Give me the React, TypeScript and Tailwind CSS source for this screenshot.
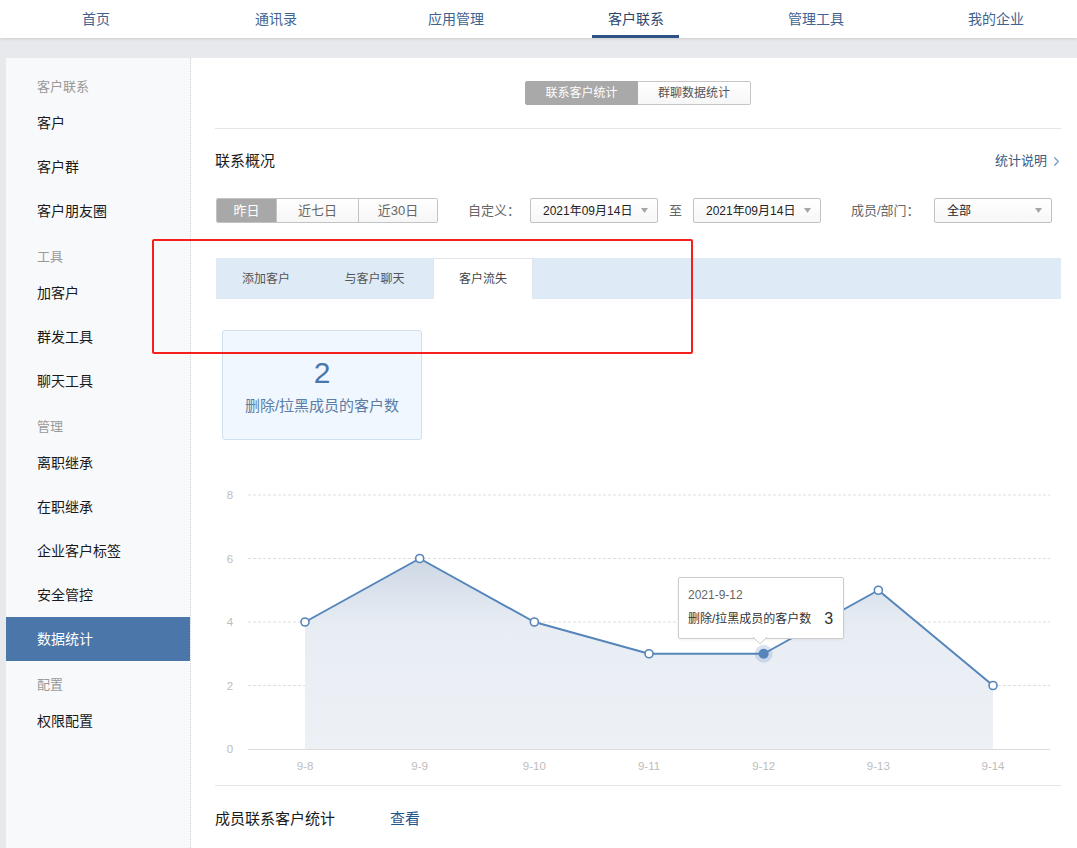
import React from "react";
import { ChevronRight } from "lucide-react";

const navItems = ["首页", "通讯录", "应用管理", "客户联系", "管理工具", "我的企业"];

type SideEntry = { type: "h" | "i"; label: string; active?: boolean };
const side: SideEntry[] = [
  { type: "h", label: "客户联系" },
  { type: "i", label: "客户" },
  { type: "i", label: "客户群" },
  { type: "i", label: "客户朋友圈" },
  { type: "h", label: "工具" },
  { type: "i", label: "加客户" },
  { type: "i", label: "群发工具" },
  { type: "i", label: "聊天工具" },
  { type: "h", label: "管理" },
  { type: "i", label: "离职继承" },
  { type: "i", label: "在职继承" },
  { type: "i", label: "企业客户标签" },
  { type: "i", label: "安全管控" },
  { type: "i", label: "数据统计", active: true },
  { type: "h", label: "配置" },
  { type: "i", label: "权限配置" },
];

function Caret() {
  return (
    <svg width="7" height="5" viewBox="0 0 7 5">
      <path d="M0 0h7L3.5 5z" fill="#a6a6a6" />
    </svg>
  );
}

function Select({ text, w }: { text: string; w: string }) {
  return (
    <div
      className={`${w} h-[25px] border border-[#c2c2c2] rounded-[2px] bg-gradient-to-b from-white to-[#f7f7f7] flex items-center justify-between pl-[12px] pr-[9px] text-[12px] text-[#222] leading-none`}
    >
      <span>{text}</span>
      <Caret />
    </div>
  );
}

const vals = [4, 6, 4, 3, 3, 5, 2];
const xlabels = ["9-8", "9-9", "9-10", "9-11", "9-12", "9-13", "9-14"];
const X0 = 215;
const Y0 = 480;
const px = (i: number) => 305 + i * 114.67 - X0;
const py = (v: number) => 748 - v * 31.75 - Y0;

function Chart() {
  const pts = vals.map((v, i) => `${px(i)},${py(v)}`).join(" ");
  const area = `${px(0)},${py(0)} ${pts} ${px(6)},${py(0)}`;
  return (
    <div className="relative mt-[41px] h-[305px] border-b border-[#e3e3e3]">
      <svg width="846" height="305" viewBox="0 0 846 305" className="absolute left-0 top-0">
        <defs>
          <linearGradient id="ar" x1="0" y1={py(6)} x2="0" y2={py(0)} gradientUnits="userSpaceOnUse">
            <stop offset="0" stopColor="#cdd8e4" />
            <stop offset="0.35" stopColor="#e8edf4" />
            <stop offset="1" stopColor="#edf1f6" />
          </linearGradient>
        </defs>
        {[2, 4, 6, 8].map((v) => (
          <line key={v} x1="33" x2="835" y1={py(v)} y2={py(v)} stroke="#dedede" strokeDasharray="3 2" strokeWidth="1" />
        ))}
        <polygon points={area} fill="url(#ar)" />
        <line x1="33" x2="835" y1={py(0) + 0.5} y2={py(0) + 0.5} stroke="#dcdcdc" strokeWidth="1" />
        {[0, 2, 4, 6, 8].map((v) => (
          <text key={v} x="15" y={py(v) + 4} textAnchor="middle" fontSize="11.5" fill="#bdbdbd" fontFamily="Liberation Sans, sans-serif">
            {v}
          </text>
        ))}
        {xlabels.map((l, i) => (
          <text key={l} x={px(i)} y="289" textAnchor="middle" fontSize="11.5" fill="#bdbdbd" fontFamily="Liberation Sans, sans-serif">
            {l}
          </text>
        ))}
        <polyline points={pts} fill="none" stroke="#5585bb" strokeWidth="2" strokeLinejoin="round" />
        {vals.map((v, i) =>
          i === 4 ? (
            <g key={i}>
              <circle cx={px(i)} cy={py(v)} r="9" fill="#5585bb" opacity="0.22" />
              <circle cx={px(i)} cy={py(v)} r="5" fill="#5585bb" />
            </g>
          ) : (
            <circle key={i} cx={px(i)} cy={py(v)} r="4" fill="#fff" stroke="#5585bb" strokeWidth="1.6" />
          )
        )}
      </svg>
      <div className="absolute left-[463px] top-[96px] w-[166px] h-[62px] bg-white border border-[#cccccc] rounded-[2px] shadow-[0_1px_3px_rgba(0,0,0,0.06)] pl-[9px] pt-[8px]">
        <div className="text-[12px] leading-[18px] text-[#666]">2021-9-12</div>
        <div className="mt-[6px] flex items-center text-[12px] leading-[18px] text-[#333]">
          <span>删除/拉黑成员的客户数</span>
          <span className="ml-[13px] text-[16px] leading-[18px]">3</span>
        </div>
        <svg width="14" height="8" viewBox="0 0 14 8" className="absolute left-[74px] bottom-[-7px]">
          <path d="M0 0 L7 7 L14 0" fill="#fff" stroke="#cccccc" strokeWidth="1" />
        </svg>
      </div>
    </div>
  );
}

export default function App() {
  return (
    <div className="relative w-[1077px] h-[848px] overflow-hidden bg-[#e8e9ec] font-['Liberation_Sans','Noto_Sans_CJK_SC',sans-serif]">
      {/* top nav */}
      <div className="relative z-10 h-[38px] bg-white flex pl-[6px] overflow-hidden shadow-[0_1px_3px_rgba(0,0,0,0.13)]">
        {navItems.map((n) => {
          const active = n === "客户联系";
          return (
            <div key={n} className="relative shrink-0 w-[180px] h-full flex items-center justify-center">
              <span className={`text-[14px] leading-[20px] ${active ? "text-[#2a466b]" : "text-[#3f6290]"}`}>{n}</span>
              {active && <div className="absolute bottom-0 left-[46px] w-[87px] h-[3px] bg-[#2e5283]" />}
            </div>
          );
        })}
      </div>

      <div className="flex pt-[20px] pl-[6px]">
        {/* sidebar */}
        <div className="shrink-0 w-[185px] h-[790px] bg-[#f8f9fb] border-r border-dotted border-[#cfd3da] pt-[5px]">
          {side.map((s, i) =>
            s.type === "h" ? (
              <div key={i} className="h-[38px] pt-[14px] pl-[31px] text-[13px] leading-[20px] text-[#999]">
                {s.label}
              </div>
            ) : (
              <div
                key={i}
                className={`h-[44px] flex items-center pl-[31px] text-[14px] ${s.active ? "bg-[#4a76aa] text-white" : "text-[#1a1a1a]"}`}
              >
                {s.label}
              </div>
            )
          )}
        </div>

        {/* main */}
        <div className="flex-1 bg-white pl-[24px] pr-[16px] pt-[23px]">
          <div className="flex justify-center">
            <div className="flex h-[24px] text-[12px] leading-none">
              <div className="w-[113px] flex items-center justify-center bg-[#a9a9a9] text-white border border-[#a9a9a9] rounded-l-[2px]">
                联系客户统计
              </div>
              <div className="w-[113px] flex items-center justify-center bg-gradient-to-b from-white to-[#f6f6f6] text-[#555] border border-l-0 border-[#c6c6c6] rounded-r-[2px]">
                群聊数据统计
              </div>
            </div>
          </div>
          <div className="mt-[23px] border-t border-[#e6e6e6]" />

          <div className="mt-[22px] flex items-center justify-between h-[20px]">
            <span className="text-[15px] leading-[20px] text-[#1a1a1a]">联系概况</span>
            <span className="flex items-center text-[13px] text-[#3a5a80]">
              统计说明
              <ChevronRight size={15} strokeWidth={2} className="ml-[2px] mr-[-3px] text-[#7a9cc6]" />
            </span>
          </div>

          <div className="mt-[27px] flex items-center h-[25px]">
            <div className="ml-[1px] flex h-[25px] border border-[#c3c3c3] rounded-[2px] overflow-hidden text-[13px] leading-none">
              <div className="w-[59px] flex items-center justify-center bg-[#a8a8a8] text-white">昨日</div>
              <div className="w-[82px] flex items-center justify-center bg-gradient-to-b from-white to-[#f6f6f6] text-[#666] border-l border-[#c3c3c3]">
                近七日
              </div>
              <div className="w-[79px] flex items-center justify-center bg-gradient-to-b from-white to-[#f6f6f6] text-[#666] border-l border-[#c3c3c3]">
                近30日
              </div>
            </div>
            <span className="ml-[30px] w-[62px] text-[13px] text-[#666]">自定义：</span>
            <Select text="2021年09月14日" w="w-[128px]" />
            <span className="w-[35px] text-center text-[13px] text-[#666]">至</span>
            <Select text="2021年09月14日" w="w-[128px]" />
            <span className="ml-[30px] w-[83px] text-[13px] text-[#666]">成员/部门：</span>
            <Select text="全部" w="w-[118px]" />
          </div>

          <div className="mt-[35px] ml-[1px] h-[41px] bg-[#deeaf6] flex text-[12px] leading-none text-[#555]">
            <div className="w-[100px] flex items-center justify-center">添加客户</div>
            <div className="w-[117px] flex items-center justify-center">与客户聊天</div>
            <div className="w-[100px] flex items-center justify-center bg-white border-x border-t border-[#dfe5ec] text-[#444]">
              客户流失
            </div>
          </div>

          <div className="mt-[31px] ml-[7px] w-[200px] h-[110px] bg-[#f0f7fe] border border-[#cfe0ee] rounded-[3px] flex flex-col items-center pt-[24px]">
            <div className="text-[30px] leading-[36px] text-[#4a76aa]">2</div>
            <div className="mt-[5px] text-[15px] leading-[20px] text-[#5b7ea7]">删除/拉黑成员的客户数</div>
          </div>

          <Chart />

          <div className="pt-[23px] flex items-center text-[15px] leading-[20px]">
            <span className="text-[#1a1a1a]">成员联系客户统计</span>
            <span className="ml-[55px] text-[#1f5590]">查看</span>
          </div>
        </div>
      </div>

      {/* annotation box */}
      <div className="absolute left-[152px] top-[239px] w-[541px] h-[115px] border-2 border-[#f5201c] rounded-[2px] pointer-events-none" />
    </div>
  );
}
